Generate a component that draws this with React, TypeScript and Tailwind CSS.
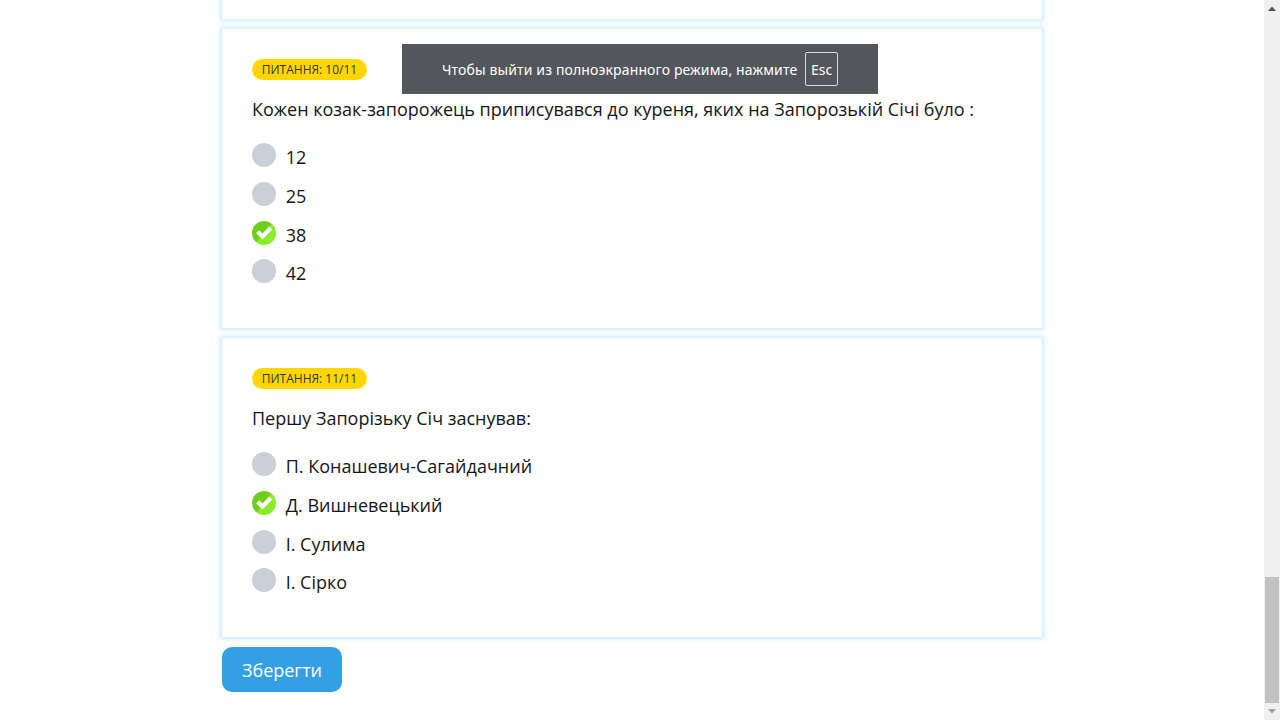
type QuestionProps = {
  badge: string;
  title: string;
  options: string[];
  selected: number;
};

function Mark({ on }: { on: boolean }) {
  if (!on) return <span className="block size-6 shrink-0 rounded-full bg-[#c9d0da]" />;
  return (
    <svg className="block size-6 shrink-0" viewBox="0 0 24 24">
      <defs>
        <linearGradient id="tick" x1="0" y1="0.1" x2="1" y2="0.9">
          <stop offset="0.45" stopColor="#6fce1c" />
          <stop offset="0.55" stopColor="#8bec2c" />
        </linearGradient>
      </defs>
      <circle cx="12" cy="12" r="12" fill="url(#tick)" />
      <path d="M4.2 12.3 L7.2 9.3 L10.5 12.5 L17.3 5.6 L20.3 8.6 L10.5 18.5 Z" fill="#fff" />
    </svg>
  );
}

function Question({ badge, title, options, selected }: QuestionProps) {
  return (
    <section className="h-[299px] w-[820px] shrink-0 bg-white px-[30px] pt-[30px] shadow-[0_0_4px_2px_#c8ecfc]">
      <div className="flex h-[21px] w-[115px] items-center justify-center rounded-full bg-[#ffd600] text-[12px] leading-none whitespace-nowrap text-[#333]">
        {badge}
      </div>
      <h2 className="mt-[15px] h-[29px] text-[18px] leading-[28px] whitespace-nowrap text-[#151515]">{title}</h2>
      <ul className="mt-[19px]">
        {options.map((label, i) => (
          <li key={label} className="flex h-[38.8px] gap-[9.7px]">
            <Mark on={i === selected} />
            <span className="pt-px text-[18px] leading-[27px] whitespace-nowrap text-[#151515]">{label}</span>
          </li>
        ))}
      </ul>
    </section>
  );
}

export default function App() {
  return (
    <div className="relative flex h-[720px] w-[1280px] overflow-hidden bg-white font-['Open_Sans','Noto_Sans',sans-serif]">
      <main className="flex w-[1264px] flex-col gap-2.5 pl-[222px]">
        <section className="h-[19px] w-[820px] shrink-0 bg-white shadow-[0_0_4px_2px_#c8ecfc]" />
        <Question
          badge="ПИТАННЯ: 10/11"
          title="Кожен козак-запорожець приписувався до куреня, яких на Запорозькій Січі було :"
          options={["12", "25", "38", "42"]}
          selected={2}
        />
        <Question
          badge="ПИТАННЯ: 11/11"
          title="Першу Запорізьку Січ заснував:"
          options={["П. Конашевич-Сагайдачний", "Д. Вишневецький", "І. Сулима", "І. Сірко"]}
          selected={1}
        />
        <button className="flex h-[45px] w-[120px] shrink-0 items-center justify-center rounded-[10px] bg-[#349fe3] pt-0.5 text-[18px] text-white">
          Зберегти
        </button>
      </main>
      <aside className="flex w-4 flex-col items-center bg-[#f0f0f0]">
        <svg className="h-[17px] w-4" viewBox="0 0 16 17">
          <path d="M4 11 L8 6.5 L12 11 Z" fill="#505050" />
        </svg>
        <div className="mt-[560px] h-[126px] w-3.5 bg-[#c1c1c1]" />
        <svg className="h-[17px] w-4" viewBox="0 0 16 17">
          <path d="M4 6 L8 10.5 L12 6 Z" fill="#a0a0a0" />
        </svg>
      </aside>
      <div className="absolute top-[44.4px] left-[402px] flex h-[50px] w-[476px] items-center bg-[#53565b] pl-10 font-['Noto_Sans','Open_Sans',sans-serif] text-[14px] text-white">
        <span className="w-[363px] shrink-0 tracking-[0.13px] whitespace-nowrap">Чтобы выйти из полноэкранного режима, нажмите</span>
        <kbd className="flex h-[34px] w-[33px] items-center justify-center rounded-[2px] border border-[#d8d9da] font-['Noto_Sans','Open_Sans',sans-serif]">
          Esc
        </kbd>
      </div>
    </div>
  );
}
